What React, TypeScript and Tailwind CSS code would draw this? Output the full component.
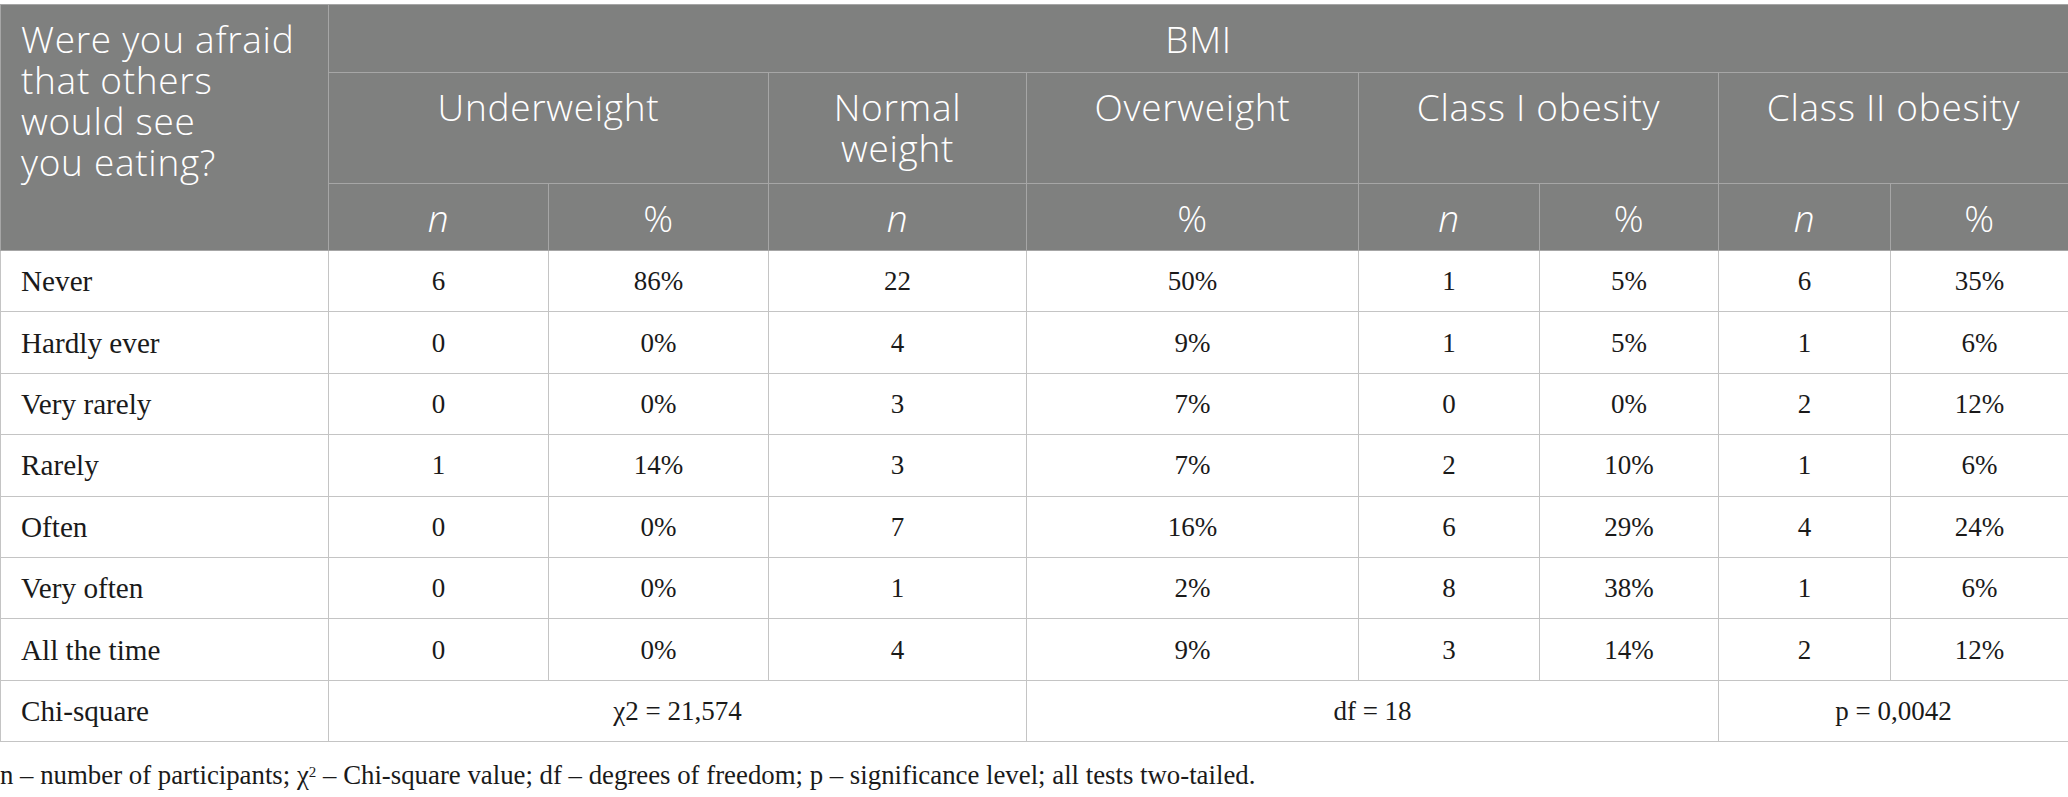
import React from "react";

const rows: [string, string[]][] = [
  ["Never", ["6", "86%", "22", "50%", "1", "5%", "6", "35%"]],
  ["Hardly ever", ["0", "0%", "4", "9%", "1", "5%", "1", "6%"]],
  ["Very rarely", ["0", "0%", "3", "7%", "0", "0%", "2", "12%"]],
  ["Rarely", ["1", "14%", "3", "7%", "2", "10%", "1", "6%"]],
  ["Often", ["0", "0%", "7", "16%", "6", "29%", "4", "24%"]],
  ["Very often", ["0", "0%", "1", "2%", "8", "38%", "1", "6%"]],
  ["All the time", ["0", "0%", "4", "9%", "3", "14%", "2", "12%"]],
];

const hd =
  "border border-[#a6a6a6] bg-[#7f807f] text-white font-light text-[37px] tracking-[0.7px] leading-[41px] align-top text-center pt-[13px] px-[20px]";
const bd =
  "border border-[#c4c4c4] text-[#1a1a1a] text-[27px] leading-[32px] align-middle text-center h-[61.4px] px-[20px]";
const lb = bd + " !text-left !text-[29.2px]";

export default function App() {
  return (
    <div className="w-[2068px] bg-white pt-[4px]">
      <table className="w-[2068px] table-fixed border-collapse">
        <colgroup>
          <col className="w-[328px]" />
          <col className="w-[220px]" />
          <col className="w-[220px]" />
          <col className="w-[258px]" />
          <col className="w-[332px]" />
          <col className="w-[181px]" />
          <col className="w-[179px]" />
          <col className="w-[172px]" />
          <col className="w-[178px]" />
        </colgroup>
        <thead className="font-['Open_Sans',sans-serif]">
          <tr className="h-[68px]">
            <th rowSpan={3} className={hd + " !text-left !px-[20px]"}>
              Were you afraid
              <br />
              that others
              <br />
              would see
              <br />
              you eating?
            </th>
            <th colSpan={8} className={hd}>
              BMI
            </th>
          </tr>
          <tr className="h-[111px]">
            <th colSpan={2} className={hd}>
              Underweight
            </th>
            <th className={hd}>
              Normal
              <br />
              weight
            </th>
            <th className={hd}>Overweight</th>
            <th colSpan={2} className={hd}>
              Class I obesity
            </th>
            <th colSpan={2} className={hd}>
              Class II obesity
            </th>
          </tr>
          <tr className="h-[67px]">
            <th className={hd}>
              <i>n</i>
            </th>
            <th className={hd}>%</th>
            <th className={hd}>
              <i>n</i>
            </th>
            <th className={hd}>%</th>
            <th className={hd}>
              <i>n</i>
            </th>
            <th className={hd}>%</th>
            <th className={hd}>
              <i>n</i>
            </th>
            <th className={hd}>%</th>
          </tr>
        </thead>
        <tbody className="font-['Liberation_Serif',serif]">
          {rows.map(([label, vals]) => (
            <tr key={label}>
              <td className={lb}>{label}</td>
              {vals.map((v, i) => (
                <td key={i} className={bd}>
                  {v}
                </td>
              ))}
            </tr>
          ))}
          <tr>
            <td className={lb}>Chi-square</td>
            <td colSpan={3} className={bd}>
              χ2 = 21,574
            </td>
            <td colSpan={3} className={bd}>
              df = 18
            </td>
            <td colSpan={2} className={bd}>
              p = 0,0042
            </td>
          </tr>
        </tbody>
      </table>
      <p className="font-['Liberation_Serif',serif] text-[#1a1a1a] text-[26.8px] leading-[30px] mt-[18px]">
        n – number of participants; χ<sup className="text-[15px]">2</sup> – Chi-square value; df – degrees of freedom; p – significance level; all tests two-tailed.
      </p>
    </div>
  );
}
